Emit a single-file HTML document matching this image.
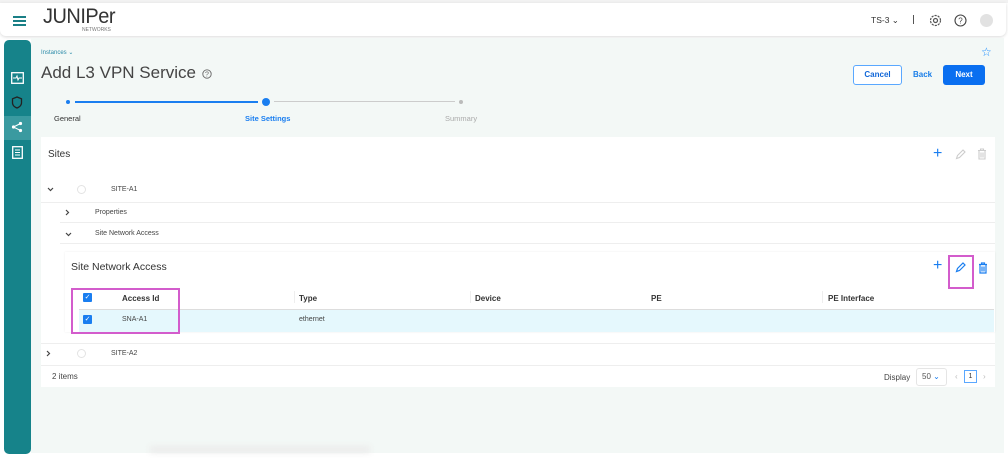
<!DOCTYPE html>
<html><head><meta charset="utf-8"><style>
*{margin:0;padding:0;box-sizing:border-box}
body{width:1008px;height:458px;background:#fff;font-family:"Liberation Sans",sans-serif;position:relative;overflow:hidden;color:#333}
.a{position:absolute}
.t{font-size:8px;color:#444}
.h{font-size:8px;font-weight:bold;color:#333}
.line{position:absolute;height:1px;background:#eee}
</style></head><body>
<div class="a" style="left:0;top:0;width:1008px;height:3px;background:#f2f2f2"></div>
<div class="a" style="left:0;top:3px;width:1006px;height:33px;background:#fff;box-shadow:0 1px 3px rgba(0,0,0,.15);border-radius:0 0 6px 6px"></div>
<div class="a" style="left:13px;top:16px;width:13px;height:2px;background:#1a7f86"></div>
<div class="a" style="left:13px;top:20px;width:13px;height:2px;background:#1a7f86"></div>
<div class="a" style="left:13px;top:24px;width:13px;height:2px;background:#1a7f86"></div>
<div class="a" style="left:43px;top:6px;font-size:21px;letter-spacing:-0.5px;color:#333;transform:scaleX(0.95);transform-origin:left;line-height:22px">JUNIPer</div>
<div class="a" style="left:82px;top:27px;font-size:5px;color:#777">NETWORKS</div>
<div class="a" style="left:871px;top:15px;font-size:8.5px;color:#333">TS-3 ⌄</div>
<div class="a" style="left:913px;top:15px;width:1px;height:9px;background:#555"></div>
<svg class="a" style="left:929px;top:14px" width="13" height="13" viewBox="0 0 13 13"><circle cx="6.5" cy="6.5" r="2" fill="none" stroke="#555" stroke-width="1.2"/><circle cx="6.5" cy="6.5" r="5" fill="none" stroke="#555" stroke-width="1.2" stroke-dasharray="2.2 1"/></svg>
<svg class="a" style="left:954px;top:14px" width="13" height="13" viewBox="0 0 13 13"><circle cx="6.5" cy="6.5" r="5.5" fill="none" stroke="#444" stroke-width="1.1"/><text x="6.5" y="9.5" font-size="8" text-anchor="middle" fill="#444" font-family="Liberation Sans">?</text></svg>
<div class="a" style="left:980px;top:14px;width:13px;height:13px;border-radius:50%;background:#e2e2e2"></div>
<div class="a" style="left:31px;top:38px;width:973px;height:415px;background:#f3f8f6"></div>
<div class="a" style="left:150px;top:446px;width:220px;height:7px;background:#ececec;filter:blur(3px)"></div>
<div class="a" style="left:4px;top:40px;width:27px;height:414px;background:#16838a;border-radius:5px"></div>
<div class="a" style="left:4px;top:116px;width:27px;height:24px;background:#3a9aa0"></div>
<svg class="a" style="left:11px;top:72px" width="13" height="12" viewBox="0 0 13 12"><rect x="0.7" y="0.7" width="11.6" height="10.6" fill="none" stroke="#fff" stroke-width="1.3"/><path d="M2 6h3l1-2 1 4 1-2h3" fill="none" stroke="#fff"/></svg>
<svg class="a" style="left:11px;top:96px" width="12" height="13" viewBox="0 0 12 13"><path d="M6 1L1.5 2.8v4C1.5 9.5 4 11.3 6 12c2-.7 4.5-2.5 4.5-5.2v-4z" fill="none" stroke="#222" stroke-width="1.3"/></svg>
<svg class="a" style="left:11px;top:121px" width="12" height="12" viewBox="0 0 12 12"><circle cx="2.5" cy="6" r="1.6" fill="#fff"/><circle cx="9.5" cy="2.5" r="1.6" fill="#fff"/><circle cx="9.5" cy="9.5" r="1.6" fill="#fff"/><path d="M2.5 6L9.5 2.5M2.5 6L9.5 9.5" stroke="#fff"/></svg>
<svg class="a" style="left:12px;top:146px" width="11" height="13" viewBox="0 0 11 13"><rect x="0.7" y="0.7" width="9.6" height="11.6" fill="none" stroke="#fff" stroke-width="1.3"/><path d="M3 4h5M3 6.5h5M3 9h5" stroke="#fff"/></svg>
<div class="a" style="left:41px;top:49px;font-size:6px;color:#2a8aa8">Instances ⌄</div>
<div class="a" style="left:41px;top:63px;font-size:17px;color:#444">Add L3 VPN Service</div>
<svg class="a" style="left:202px;top:69px" width="10" height="10" viewBox="0 0 10 10"><circle cx="5" cy="5" r="4.2" fill="none" stroke="#666" stroke-width=".9"/><text x="5" y="7.6" font-size="7" text-anchor="middle" fill="#666">?</text></svg>
<div class="a" style="left:981px;top:45px;font-size:12px;color:#1a8cff">☆</div>
<div class="a" style="left:853px;top:65px;width:49px;height:20px;border:1px solid #5aa8ff;border-radius:3px;background:#fff;font-size:8px;font-weight:bold;color:#1167d8;text-align:center;line-height:18px">Cancel</div>
<div class="a" style="left:913px;top:70px;font-size:8px;font-weight:bold;color:#1a7ee8">Back</div>
<div class="a" style="left:943px;top:65px;width:42px;height:20px;background:#0a6ff0;border-radius:3px;font-size:8px;font-weight:bold;color:#fff;text-align:center;line-height:20px">Next</div>
<div class="a" style="left:66px;top:100px;width:4px;height:4px;border-radius:50%;background:#1a7ef0"></div>
<div class="a" style="left:75px;top:101px;width:183px;height:2px;background:#1a7ef0"></div>
<div class="a" style="left:262px;top:98px;width:8px;height:8px;border-radius:50%;background:#1a7ef0"></div>
<div class="a" style="left:274px;top:101px;width:181px;height:1px;background:#ccc"></div>
<div class="a" style="left:459px;top:100px;width:4px;height:4px;border-radius:50%;background:#bbb"></div>
<div class="a" style="left:54px;top:114px;font-size:7.5px;color:#333">General</div>
<div class="a" style="left:245px;top:114px;font-size:7.5px;color:#1a7ef0;font-weight:bold">Site Settings</div>
<div class="a" style="left:445px;top:114px;font-size:7.5px;color:#aaa">Summary</div>
<div class="a" style="left:41px;top:137px;width:954px;height:250px;background:#fff"></div>
<div class="a" style="left:48px;top:149px;font-size:10px;color:#333">Sites</div>
<div class="a" style="left:933px;top:145px;font-size:16px;color:#1a7ef0">+</div>
<svg class="a" style="left:955px;top:149px" width="11" height="11" viewBox="0 0 11 11"><path d="M1.5 9.5l1-3L8 1l2 2-5.5 5.5z" fill="none" stroke="#ccc" stroke-width="1.1"/></svg>
<svg class="a" style="left:977px;top:148px" width="10" height="12" viewBox="0 0 10 12"><path d="M1 2.5h8M3.5 2.5V1h3v1.5M2 2.5v8.5h6V2.5M4 4.5v5M6 4.5v5" fill="none" stroke="#ccc" stroke-width="1.1"/></svg>
<svg class="a" style="left:47px;top:187px" width="7" height="5" viewBox="0 0 7 5"><path d="M1 1l2.5 2.5L6 1" fill="none" stroke="#444" stroke-width="1.2"/></svg>
<div class="a" style="left:77px;top:185px;width:9px;height:9px;border:1px solid #e3e3e3;border-radius:50%"></div>
<div class="a t" style="left:111px;top:186px;font-size:7px">SITE-A1</div>
<div class="line" style="left:41px;top:202px;width:954px"></div>
<svg class="a" style="left:65px;top:209px" width="5" height="7" viewBox="0 0 5 7"><path d="M1 1l2.5 2.5L1 6" fill="none" stroke="#444" stroke-width="1.2"/></svg>
<div class="a t" style="left:95px;top:209px;font-size:7px">Properties</div>
<div class="line" style="left:60px;top:222px;width:935px"></div>
<svg class="a" style="left:65px;top:232px" width="7" height="5" viewBox="0 0 7 5"><path d="M1 1l2.5 2.5L6 1" fill="none" stroke="#444" stroke-width="1.2"/></svg>
<div class="a t" style="left:95px;top:230px;font-size:7px">Site Network Access</div>
<div class="line" style="left:60px;top:243px;width:935px"></div>
<div class="a" style="left:65px;top:252px;width:930px;height:80px;box-shadow:0 0 2px rgba(0,0,0,.08);background:#fff"></div>
<div class="a" style="left:71px;top:261px;font-size:10.5px;color:#333">Site Network Access</div>
<div class="a" style="left:933px;top:257px;font-size:16px;color:#1a7ef0">+</div>
<svg class="a" style="left:955px;top:262px" width="11" height="11" viewBox="0 0 11 11"><path d="M1.5 9.5l1-3L8 1l2 2-5.5 5.5z" fill="none" stroke="#1a7ef0" stroke-width="1.2"/></svg>
<svg class="a" style="left:978px;top:262px" width="10" height="12" viewBox="0 0 10 12"><path d="M1 2.5h8M3.5 2.5V1h3v1.5M2 2.5v8.5h6V2.5M4 4.5v5M6 4.5v5" fill="none" stroke="#1a7ef0" stroke-width="1.2"/></svg>
<div class="a" style="left:948px;top:255px;width:26px;height:34px;border:2px solid #d35ccc"></div>
<div class="a h" style="left:122px;top:294px">Access Id</div>
<div class="a h" style="left:299px;top:294px">Type</div>
<div class="a h" style="left:475px;top:294px">Device</div>
<div class="a h" style="left:651px;top:294px">PE</div>
<div class="a h" style="left:828px;top:294px">PE Interface</div>
<div class="a" style="left:294px;top:291px;width:1px;height:12px;background:#eee"></div>
<div class="a" style="left:470px;top:291px;width:1px;height:12px;background:#eee"></div>
<div class="a" style="left:822px;top:291px;width:1px;height:12px;background:#eee"></div>
<div class="a" style="left:79px;top:309px;width:915px;height:23px;background:#e5f8fd;border-top:1px solid #ddd"></div>
<div class="a" style="left:83px;top:293px;width:9px;height:9px;background:#1a7ef0;border-radius:1px;color:#fff;font-size:7px;line-height:9px;text-align:center">✓</div>
<div class="a" style="left:83px;top:315px;width:9px;height:9px;background:#1a7ef0;border-radius:1px;color:#fff;font-size:7px;line-height:9px;text-align:center">✓</div>
<div class="a t" style="left:122px;top:316px;font-size:7px">SNA-A1</div>
<div class="a t" style="left:299px;top:316px;font-size:7px">ethernet</div>
<div class="a" style="left:71px;top:288px;width:109px;height:46px;border:2px solid #d35ccc"></div>
<div class="line" style="left:41px;top:343px;width:954px"></div>
<svg class="a" style="left:46px;top:350px" width="5" height="7" viewBox="0 0 5 7"><path d="M1 1l2.5 2.5L1 6" fill="none" stroke="#444" stroke-width="1.2"/></svg>
<div class="a" style="left:77px;top:349px;width:9px;height:9px;border:1px solid #e3e3e3;border-radius:50%"></div>
<div class="a t" style="left:111px;top:350px;font-size:7px">SITE-A2</div>
<div class="line" style="left:41px;top:365px;width:954px"></div>
<div class="a" style="left:52px;top:372px;font-size:8px;color:#444">2 items</div>
<div class="a" style="left:884px;top:373px;font-size:8px;color:#444">Display</div>
<div class="a" style="left:916px;top:368px;width:31px;height:18px;border:1px solid #e5e5e5;border-radius:3px;font-size:8px;color:#555;line-height:16px;padding-left:5px">50 <span style="color:#1a7ef0">⌄</span></div>
<div class="a" style="left:955px;top:372px;font-size:8px;color:#bbb">‹</div>
<div class="a" style="left:964px;top:370px;width:13px;height:13px;border:1px solid #5aa8ff;font-size:7px;color:#333;text-align:center;line-height:11px">1</div>
<div class="a" style="left:983px;top:372px;font-size:8px;color:#bbb">›</div>
</body></html>
